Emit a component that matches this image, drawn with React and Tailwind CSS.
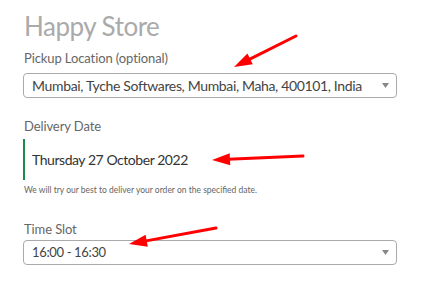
import React from 'react'

const font = { fontFamily: 'Lato, "Noto Sans", sans-serif' }

function SelectBox({ value, textClass }) {
  return (
    <div className="flex h-[25px] w-[374px] items-center justify-between rounded-[4px] border border-[#aaaaaa] bg-white pl-[8px] pr-[7px]">
      <span className={`whitespace-nowrap leading-none text-[#444] ${textClass}`}>{value}</span>
      <svg width="7" height="5" viewBox="0 0 7 5" className="shrink-0">
        <path d="M0 0 L7 0 L3.5 5 Z" fill="#888" />
      </svg>
    </div>
  )
}

function Arrow({ x1, y1, x2, y2 }) {
  const dx = x2 - x1
  const dy = y2 - y1
  const len = Math.hypot(dx, dy)
  const ux = dx / len
  const uy = dy / len
  const hl = 18
  const hw = 6
  const bx = x2 - ux * hl
  const by = y2 - uy * hl
  const p1 = `${bx - uy * hw},${by + ux * hw}`
  const p2 = `${bx + uy * hw},${by - ux * hw}`
  return (
    <g>
      <line x1={x1} y1={y1} x2={bx + ux * 2} y2={by + uy * 2} stroke="#ff0000" strokeWidth="3" strokeLinecap="round" />
      <polygon points={`${x2},${y2} ${p1} ${p2}`} fill="#ff0000" />
    </g>
  )
}

export default function App() {
  return (
    <div className="relative h-[297px] w-[426px] overflow-hidden bg-white" style={font}>
      <div className="flex flex-col pl-[23px] pt-[10px]">
        <h1 className="pl-[1px] text-[26px] leading-[32px] tracking-[-0.5px] text-[#aaaaaa]">Happy Store</h1>
        <div className="mt-[7px] pl-[1px] text-[13px] leading-[18px] tracking-[-0.1px] text-[#666]">Pickup Location (optional)</div>
        <div className="mt-[6px]">
          <SelectBox
            value="Mumbai, Tyche Softwares, Mumbai, Maha, 400101, India"
            textClass="text-[14px] tracking-[-0.35px]"
          />
        </div>
        <div className="mt-[19px] pl-[1px] text-[13px] leading-[18px] tracking-[-0.1px] text-[#666]">Delivery Date</div>
        <div className="mt-[4px] flex h-[41px] items-center border-l-[2px] border-[#1e8a4c] pl-[7px]">
          <span className="text-[14px] tracking-[-0.45px] text-[#333]">Thursday 27 October 2022</span>
        </div>
        <div className="mt-[4px] pl-[1px] text-[8.5px] leading-[12px] text-[#666]">
          We will try our best to deliver your order on the specified date.
        </div>
        <div className="mt-[24px] pl-[1px] text-[13px] leading-[18px] tracking-[-0.1px] text-[#666]">Time Slot</div>
        <div className="mt-[2px]">
          <SelectBox value="16:00 - 16:30" textClass="text-[13px] tracking-[-0.35px]" />
        </div>
      </div>
      <svg className="pointer-events-none absolute left-0 top-0" width="426" height="297">
        <Arrow x1={296} y1={36} x2={234} y2={67} />
        <Arrow x1={303} y1={156} x2={212} y2={160} />
        <Arrow x1={216} y1={228} x2={129} y2={244} />
      </svg>
    </div>
  )
}
